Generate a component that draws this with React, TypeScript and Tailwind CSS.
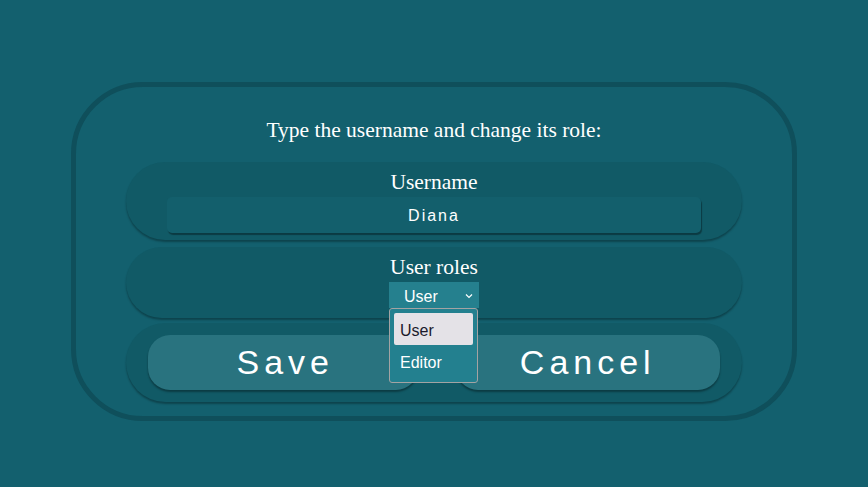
export default function App() {
  return (
    <div className="min-h-[487px] w-full bg-[#13606e] pt-[82px]">
      <div className="mx-auto flex h-[339px] w-[726px] flex-col items-center rounded-[72px] border-[5px] border-[#0f4f5b]">
        {/* Title */}
        <p
          className="mt-[31px] text-[21.5px] leading-[24px] text-white"
          style={{ fontFamily: '"Liberation Serif", "Times New Roman", serif' }}
        >
          Type the username and change its role:
        </p>

        {/* Username */}
        <div className="mt-[20px] flex h-[78px] w-[616px] flex-col items-center rounded-full bg-[#115a66] px-[41px] pt-[8px] shadow-[0_2px_2px_rgba(0,0,0,0.3)]">
          <label
            className="text-[21.5px] leading-[24px] text-white"
            style={{ fontFamily: '"Liberation Serif", "Times New Roman", serif' }}
          >
            Username
          </label>
          <div
            className="mt-[3px] flex h-[36px] w-full items-center justify-center rounded-[5px] bg-[#135f6c] pt-[1px] text-[16px] tracking-[2px] text-white shadow-[1px_2px_1px_rgba(0,0,0,0.35)]"
            style={{ fontFamily: '"Liberation Sans", Arial, sans-serif' }}
          >
            Diana
          </div>
        </div>

        {/* User roles */}
        <div className="relative z-10 mt-[7px] flex h-[71px] w-[616px] flex-col items-center rounded-full bg-[#115a66] pt-[8px] shadow-[0_2px_2px_rgba(0,0,0,0.3)]">
          <label
            className="text-[21.5px] leading-[24px] text-white"
            style={{ fontFamily: '"Liberation Serif", "Times New Roman", serif' }}
          >
            User roles
          </label>
          <div className="relative mt-[3px]">
            <div
              className="flex h-[26px] w-[90px] items-center bg-[#25808e] pl-[15px] pr-[6px] pt-[3px] text-[16px] text-white"
              style={{ fontFamily: '"Liberation Sans", Arial, sans-serif' }}
            >
              <span className="flex-1">User</span>
              <svg width="8" height="6" viewBox="0 0 8 6" className="mb-[1px]">
                <polyline points="1,1.5 4,4.5 7,1.5" fill="none" stroke="white" strokeWidth="1.2" />
              </svg>
            </div>
            {/* open listbox */}
            <div
              className="absolute left-0 top-full w-[89px] rounded-[3px] border border-[#a3a3a3] bg-[#23808f] p-[4px] pb-[5px] text-[16px]"
              style={{ fontFamily: '"Liberation Sans", Arial, sans-serif' }}
            >
              <div className="flex h-[32px] items-center rounded-[2px] bg-[#e4e2e7] pl-[6px] pt-[3px] text-[#1b1a2c]">User</div>
              <div className="flex h-[32px] items-center pl-[6px] pt-[3px] text-white">Editor</div>
            </div>
          </div>
        </div>

        {/* Buttons */}
        <div className="mt-[5px] flex h-[79px] w-[616px] items-center gap-[38px] rounded-full bg-[#115a66] px-[22px] shadow-[0_2px_2px_rgba(0,0,0,0.3)]">
          <button
            className="flex h-[55px] flex-1 items-center justify-center rounded-[22px] bg-[#29737f] pl-[5px] text-[34px] tracking-[5px] text-white shadow-[0_2px_2px_rgba(0,0,0,0.35)]"
            style={{ fontFamily: '"Liberation Sans", Arial, sans-serif' }}
          >
            Save
          </button>
          <button
            className="flex h-[55px] flex-1 items-center justify-center rounded-[22px] bg-[#29737f] text-[34px] tracking-[5px] text-white shadow-[0_2px_2px_rgba(0,0,0,0.35)]"
            style={{ fontFamily: '"Liberation Sans", Arial, sans-serif' }}
          >
            Cancel
          </button>
        </div>
      </div>
    </div>
  );
}
